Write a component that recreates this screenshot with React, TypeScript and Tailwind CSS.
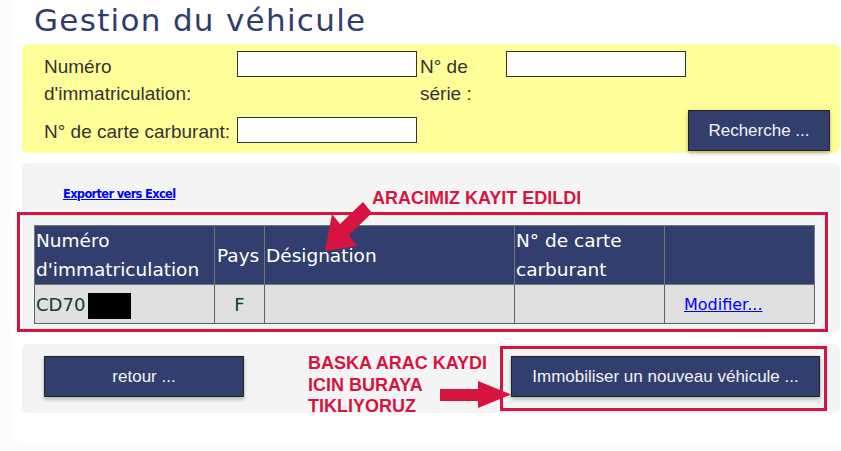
import React from 'react';

const btn =
  "flex items-center justify-center bg-[#323f6e] text-[#f2f2f2] text-[17px] border border-[#222] shadow-[0_2px_4px_rgba(0,0,0,0.3)]";
const field = "block w-[180px] h-[26px] p-0 border border-[#333] bg-white outline-none";

const App: React.FC = () => {
  return (
    <div className="relative w-[841px] h-[451px] overflow-hidden bg-[#fcfcfc] font-['Liberation_Sans',Arial,sans-serif]">
      <div className="ml-[12px] w-[829px] h-[443px] rounded-bl-[10px] bg-white">
        {/* Title */}
        <h1 className="h-[44px] pt-[3px] pl-[22px] text-[31px] leading-[34px] tracking-[1.3px] font-normal font-['DejaVu_Sans',Verdana,sans-serif] text-[#2f3c6c]">
          Gestion du véhicule
        </h1>

        {/* Search panel */}
        <div className="ml-[10px] w-[818px] h-[109px] rounded-[6px] bg-[#ffff99] pl-[22px] pt-[7px] text-[19px] leading-[27px] text-[#333]">
          <div className="flex items-start">
            <div className="w-[193px] mt-[2px]">
              Numéro
              <br />
              d'immatriculation:
            </div>
            <input type="text" readOnly className={field} />
            <div className="ml-[3px] w-[86px] mt-[2px]">
              N° de
              <br />
              série :
            </div>
            <input type="text" readOnly className={field} />
          </div>
          <div className="flex items-start mt-[3px]">
            <div className="w-[193px] mt-[8px] whitespace-nowrap">N° de carte carburant:</div>
            <input type="text" readOnly className={`${field} mt-[7px]`} />
            <button className={`${btn} ml-auto mr-[10px] w-[142px] h-[41px]`}>Recherche ...</button>
          </div>
        </div>

        {/* Results panel */}
        <div className="mt-[10px] ml-[10px] w-[818px] h-[170px] rounded-[6px] bg-[#f4f4f4] pt-[22px]">
          <div className="pl-[41px] h-[15px] leading-[15px] mb-[12px]">
            <a href="#" className="font-['DejaVu_Sans',Verdana,sans-serif] font-bold text-[11.5px] tracking-[-0.7px] text-[#0000ff] underline">
              Exporter vers Excel
            </a>
          </div>
          <div className="-ml-[5px] w-[811px] h-[120px] border-[3px] border-[#d7143f] pl-[14px] pt-[10px]">
            <table className="w-[780px] table-fixed border-collapse font-['DejaVu_Sans',Verdana,sans-serif]">
              <colgroup>
                <col className="w-[180px]" />
                <col className="w-[50px]" />
                <col className="w-[250px]" />
                <col className="w-[150px]" />
                <col className="w-[150px]" />
              </colgroup>
              <thead>
                <tr className="bg-[#323f6e] text-white text-[18.5px] leading-[29px]">
                  <th className="h-[58px] p-0 pl-[1px] font-normal text-left align-middle border border-[#777]">
                    Numéro
                    <br />
                    d'immatriculation
                  </th>
                  <th className="p-0 pl-[2px] font-normal text-left align-middle border border-[#777]">Pays</th>
                  <th className="p-0 pl-[1px] font-normal text-left align-middle border border-[#777]">Désignation</th>
                  <th className="p-0 pl-[1px] font-normal text-left align-middle border border-[#777]">
                    N° de carte
                    <br />
                    carburant
                  </th>
                  <th className="p-0 border border-[#777]"></th>
                </tr>
              </thead>
              <tbody>
                <tr className="bg-[#e0e0e0] text-[#103c38] text-[18px] leading-[37px]">
                  <td className="h-[38px] p-0 pl-[1px] border border-[#566666]">
                    CD70
                    <span className="inline-block ml-[3px] w-[43px] h-[26px] bg-black align-middle"></span>
                  </td>
                  <td className="p-0 text-center border border-[#566666]">F</td>
                  <td className="p-0 border border-[#566666]"></td>
                  <td className="p-0 border border-[#566666]"></td>
                  <td className="p-0 pl-[19px] border border-[#566666]">
                    <a href="#" className="text-[16px] text-[#0000ff] underline">
                      Modifier...
                    </a>
                  </td>
                </tr>
              </tbody>
            </table>
          </div>
        </div>

        {/* Actions panel */}
        <div className="mt-[11px] ml-[10px] w-[818px] h-[69px] rounded-[6px] bg-[#f4f4f4] flex items-start">
          <button className={`${btn} ml-[22px] mt-[12px] w-[200px] h-[41px]`}>retour ...</button>
          <div className="ml-auto mr-[13px] mt-[2px] w-[327px] h-[65px] border-[3px] border-[#d7143f] pl-[8px] pt-[7px]">
            <button className={`${btn} w-[309px] h-[41px]`}>Immobiliser un nouveau véhicule ...</button>
          </div>
        </div>
      </div>

      {/* Annotations */}
      <div className="absolute left-[372px] top-[189px] text-[18px] leading-[18px] font-bold text-[#d7143f] whitespace-nowrap">
        ARACIMIZ KAYIT EDILDI
      </div>
      <div className="absolute left-[308px] top-[353px] text-[18px] leading-[21.5px] font-bold text-[#d7143f] whitespace-nowrap">
        BASKA ARAC KAYDI
        <br />
        ICIN BURAYA
        <br />
        TIKLIYORUZ
      </div>
      <svg className="absolute left-0 top-0 pointer-events-none" width="841" height="451" viewBox="0 0 841 451">
        <polygon
          points="363,202 372,213 349,235 357,246 325,251 332,214 340,224"
          fill="#d7143f"
        />
        <polygon points="440,389 478,389 478,381 511,394.5 478,408 478,401 440,401" fill="#d7143f" />
      </svg>
    </div>
  );
};

export default App;
